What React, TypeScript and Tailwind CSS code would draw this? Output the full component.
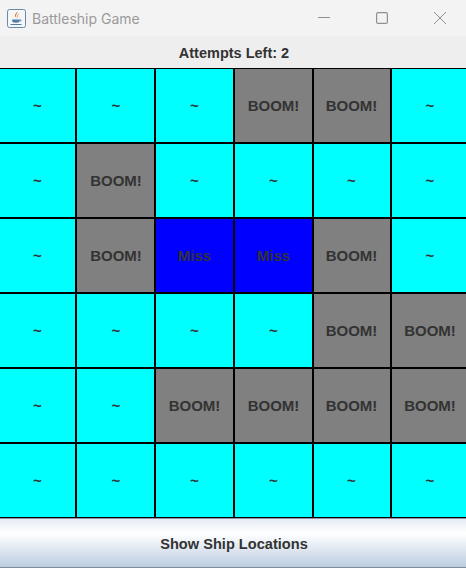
const rows = [
  ["~", "~", "~", "BOOM!", "BOOM!", "~"],
  ["~", "BOOM!", "~", "~", "~", "~"],
  ["~", "BOOM!", "Miss", "Miss", "BOOM!", "~"],
  ["~", "~", "~", "~", "BOOM!", "BOOM!"],
  ["~", "~", "BOOM!", "BOOM!", "BOOM!", "BOOM!"],
  ["~", "~", "~", "~", "~", "~"],
];

function JavaIcon() {
  return (
    <svg width="19" height="19" viewBox="0 0 19 19" fill="none">
      <rect x="0.5" y="0.5" width="18" height="18" rx="2" fill="#f4f6f8" stroke="#6b88a6" />
      <path d="M10 2.500c1.500 2.200-2 3.200-.8 5.400.3.500.8 1 .8 1-1.700-1-3-2.500-1.600-4 .8-.8 1.600-1.400 1.600-2.400z" fill="#e8792b" />
      <path d="M11.800 5.200c-1 .8-1.900 1.700-1 3.200" stroke="#e8792b" strokeWidth="0.8" />
      <path d="M5.200 10.500h7.400v1.600c0 1-1 1.600-3.700 1.600s-3.700-.6-3.700-1.600z" fill="#4d7ea8" />
      <path d="M12.600 10.800h1.400v1.300h-1.400" stroke="#4d7ea8" strokeWidth="0.7" />
      <path d="M3.500 15.500h11" stroke="#4d7ea8" strokeWidth="1" />
    </svg>
  );
}

function Cell({ label, col }: { label: string; col: number }) {
  const bg =
    label === "BOOM!" ? "bg-[#808080]" : label === "Miss" ? "bg-[#0000ff]" : "bg-[#00ffff]";
  // the window clips the outer borders, and the labels sit a pixel off centre in some columns
  const edge =
    col === 0
      ? "border-l-0"
      : col === 1
        ? "pl-[1px]"
        : col === 4
          ? "pr-[1px]"
          : col === 5
            ? "border-r-0 pl-[2px]"
            : "";
  return (
    <div
      className={`flex items-center justify-center border border-black pt-[2px] text-[15px] font-bold text-[#333333] ${bg} ${edge}`}
    >
      {label}
    </div>
  );
}

export default function App() {
  return (
    <div className="flex h-[568px] w-[466px] flex-col overflow-hidden bg-[#eeeeee] font-['Liberation_Sans',Arial,sans-serif]">
      <div className="flex h-[36px] items-center bg-[#f3f3f3]">
        <div className="ml-[7px] flex items-center">
          <JavaIcon />
        </div>
        <span className="ml-[6px] font-['Inter','Noto_Sans',sans-serif] text-[14px] text-[#9a9a9a]">
          Battleship Game
        </span>
        <div className="ml-auto mr-[20px] flex items-center gap-[46px] text-[#8f8f8f]">
          <svg width="12" height="12" viewBox="0 0 12 12" fill="none" stroke="currentColor">
            <path d="M0 5.500h12" />
          </svg>
          <svg width="12" height="12" viewBox="0 0 12 12" fill="none" stroke="currentColor">
            <rect x="0.600" y="0.600" width="10.800" height="10.800" rx="1.500" strokeWidth="1.200" />
          </svg>
          <svg width="12" height="12" viewBox="0 0 12 12" fill="none" stroke="currentColor">
            <path d="M0 0l12 12M12 0L0 12" />
          </svg>
        </div>
      </div>
      <div className="flex h-[32px] items-center justify-center bg-[#eeeeee] pl-[2px] pt-[3px] text-[14.500px] font-bold text-[#333333]">
        Attempts Left: 2
      </div>
      <div className="grid h-[450px] grid-cols-[76px_79px_79px_79px_78px_75px] grid-rows-6">
        {rows.flatMap((row, r) =>
          row.map((label, c) => <Cell key={`${r}-${c}`} label={label} col={c} />),
        )}
      </div>
      <button className="flex h-[50px] items-center justify-center border-t border-t-[#8a94a6] border-b border-b-[#7f8c9c] bg-gradient-to-b from-[#e6ebf3] via-[#ffffff] via-30% to-[#bccde0] pl-[2px] pt-[4px] text-[14.600px] font-bold text-[#333333]">
        Show Ship Locations
      </button>
    </div>
  );
}
